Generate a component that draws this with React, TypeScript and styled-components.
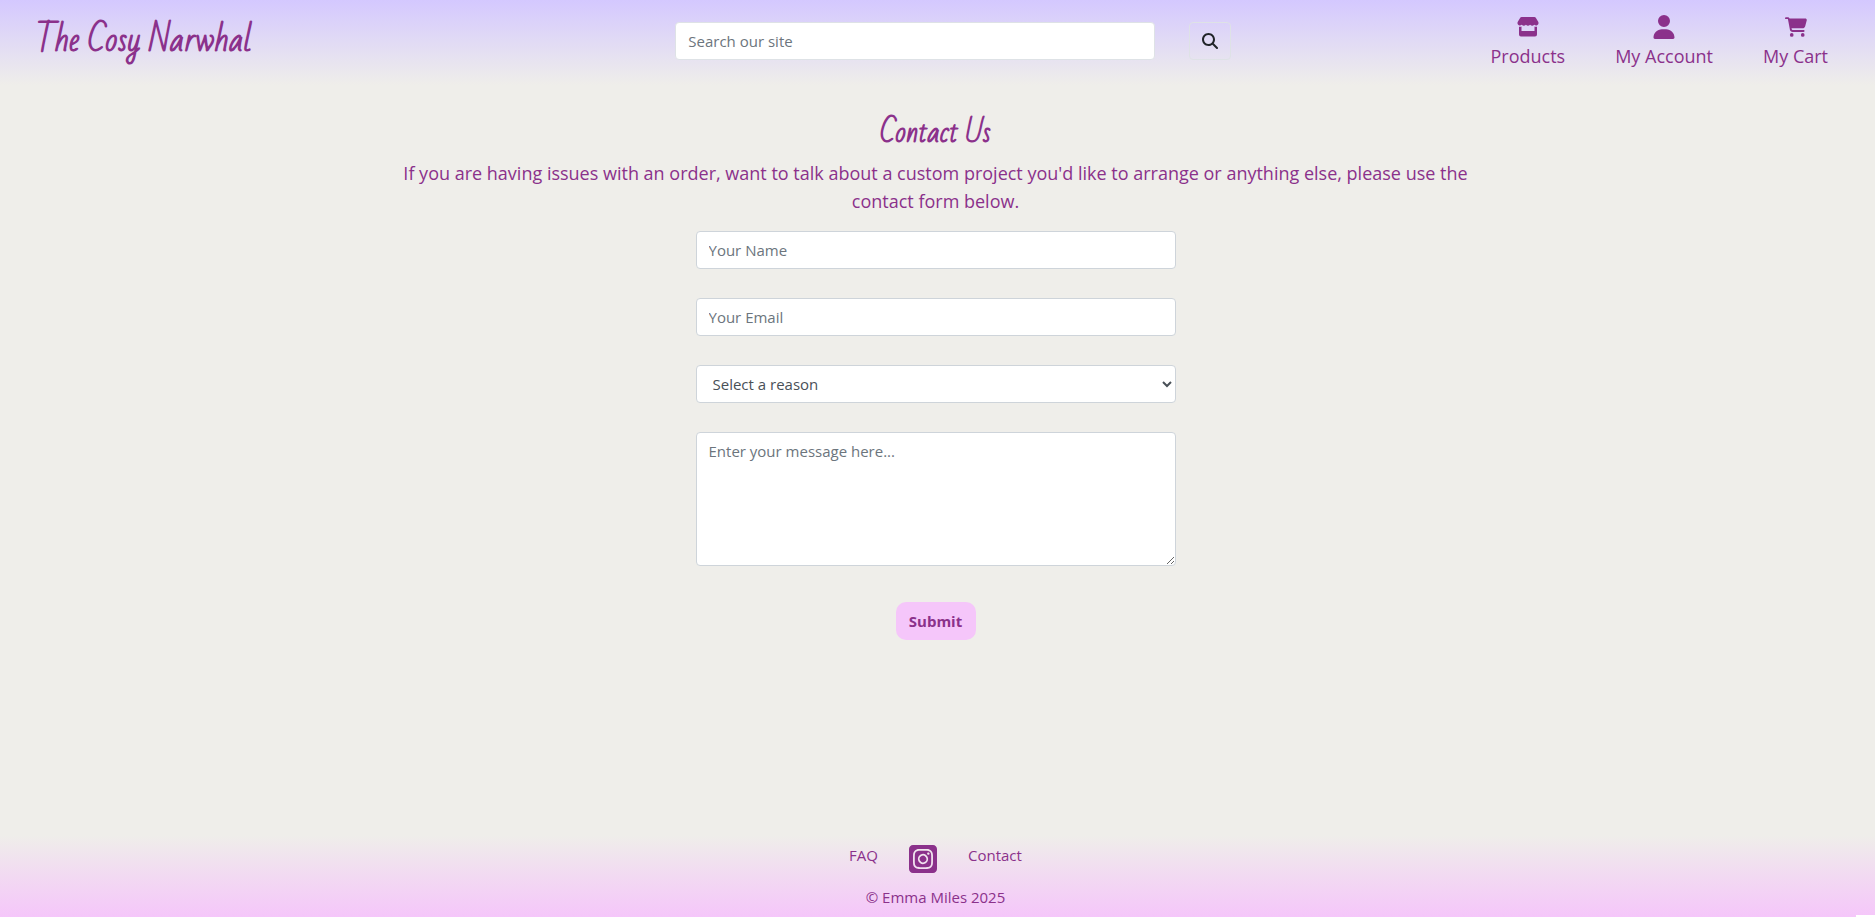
import React from "react";
import styled, { createGlobalStyle } from "styled-components";
import { FaUser, FaCartShopping, FaMagnifyingGlass, FaSquareInstagram } from "react-icons/fa6";

const plum = "#8b318b";
const paper = "#efeeea";
const line = "#ced4da";

const Global = createGlobalStyle`
  *, *::before, *::after { box-sizing: border-box; }
  body {
    margin: 0;
    background: ${paper};
    color: ${plum};
    font-family: "Segoe UI", "Open Sans", "Noto Sans", sans-serif;
    font-size: 15px;
    line-height: 24px;
  }
`;

const Page = styled.div`
  min-height: 100vh;
  display: flex;
  flex-direction: column;
`;

const Header = styled.header`
  display: grid;
  grid-template-columns: 15fr auto 14fr;
  align-items: center;
  height: 85px;
  padding: 0 47px 4px 36px;
  background: linear-gradient(#d4c8ff, ${paper});
`;

const scriptFace = `
  font-family: "Bad Script", "Liberation Sans Narrow", "Open Sans", sans-serif;
  font-weight: 700;
`;

const Brand = styled.a`
  ${scriptFace}
  justify-self: start;
  color: ${plum};
  font-size: 32px;
  line-height: 48px;
  text-decoration: none;
  white-space: nowrap;
`;

const Search = styled.form`
  display: flex;
  gap: 34px;
`;

const field = `
  display: block;
  width: 480px;
  max-width: 100%;
  border: 1px solid ${line};
  border-radius: 4px;
  background: #fff;
  color: #495057;
  font: inherit;
  &::placeholder { color: #6c757d; opacity: 1; }
`;

const Input = styled.input<{ $soft?: boolean }>`
  ${field}
  height: 38px;
  padding: 6px 12px;
  ${(p) => p.$soft && "border-color: #dee2e6;"}
`;

const Select = styled.select`
  ${field}
  height: 38px;
  padding: 6px 0 6px 12px;
`;

const TextArea = styled.textarea`
  ${field}
  height: 134px;
  padding: 6px 12px;
  resize: both;
`;

const SearchButton = styled.button`
  display: grid;
  place-items: center;
  width: 42px;
  height: 38px;
  padding: 0;
  border: 1px solid #dee2e6;
  border-radius: 4px;
  background: transparent;
  color: #212529;
  font-size: 16px;
`;

const Nav = styled.nav`
  justify-self: end;
  display: flex;
  gap: 50px;
  padding-top: 2px;
`;

const NavLink = styled.a`
  display: flex;
  flex-direction: column;
  align-items: center;
  color: ${plum};
  font-size: 18px;
  line-height: 30px;
  text-decoration: none;
  white-space: nowrap;
`;

const IconBox = styled.span`
  display: grid;
  place-items: center;
  height: 28px;
`;

const Main = styled.main`
  flex: 1;
  display: flex;
  flex-direction: column;
  align-items: center;
  padding: 24px 20px 24px 16px;
`;

const Title = styled.h1`
  ${scriptFace}
  margin: 0;
  font-size: 28px;
  line-height: 48px;
`;

const Lead = styled.p`
  width: 60%;
  margin: 2px 0 16px;
  font-size: 18px;
  line-height: 28px;
  text-align: center;
`;

const Form = styled.form`
  display: flex;
  flex-direction: column;
  align-items: center;
  gap: 29px;
`;

const Submit = styled.button`
  width: 80px;
  height: 38px;
  margin-top: 7px;
  padding: 0;
  border: 0;
  border-radius: 10px;
  background: #f5c6fa;
  color: ${plum};
  font: inherit;
  font-weight: 700;
`;

const Footer = styled.footer`
  display: flex;
  flex-direction: column;
  align-items: center;
  gap: 10px;
  height: 82px;
  padding: 8px 4px 0 0;
  background: linear-gradient(${paper}, #f5c6fa);
`;

const FooterLinks = styled.nav`
  display: flex;
  gap: 29px;
  height: 32px;
`;

const FooterLink = styled.a`
  color: ${plum};
  text-decoration: none;
`;

const StatusTab = styled.div`
  position: fixed;
  right: 0;
  bottom: 0;
  width: 19px;
  height: 2px;
  background: #fff;
`;

const StoreIcon = () => (
  <svg width="22" height="20" viewBox="0 0 22 20" fill="currentColor" aria-hidden="true">
    <path d="M4.6 0h12.8c.6 0 1.1.3 1.4.8l2.4 3.9c.8 1.5.1 3.400-1.5 3.700-.9.200-1.800-.1-2.400-.7a3 3 0 0 1-4.200 0 3 3 0 0 1-4.200 0 3 3 0 0 1-4.200 0c-.6.6-1.500.9-2.400.7C.7 8.100 0 6.200.8 4.700L3.200.8C3.500.3 4 0 4.600 0Z" />
    <path fillRule="evenodd" d="M2 9.700c.9.200 1.800.1 2.500-.2V14h13V9.500c.7.300 1.600.4 2.500.2V17.500a2 2 0 0 1-2 2H4a2 2 0 0 1-2-2Z" />
  </svg>
);

const block = (e: React.FormEvent) => e.preventDefault();

export default function App() {
  return (
    <Page>
      <Global />
      <Header>
        <Brand href="#">The Cosy Narwhal</Brand>
        <Search role="search" onSubmit={block}>
          <Input $soft type="search" aria-label="Search our site" placeholder="Search our site" />
          <SearchButton type="submit" aria-label="Search"><FaMagnifyingGlass /></SearchButton>
        </Search>
        <Nav aria-label="Shop">
          <NavLink href="#products"><IconBox><StoreIcon /></IconBox>Products</NavLink>
          <NavLink href="#account"><IconBox><FaUser size={24} /></IconBox>My Account</NavLink>
          <NavLink href="#cart"><IconBox><FaCartShopping size={22} /></IconBox>My Cart</NavLink>
        </Nav>
      </Header>
      <Main>
        <Title>Contact Us</Title>
        <Lead>
          If you are having issues with an order, want to talk about a custom project you'd like to
          arrange or anything else, please use the contact form below.
        </Lead>
        <Form onSubmit={block}>
          <Input type="text" aria-label="Your Name" placeholder="Your Name" />
          <Input type="email" aria-label="Your Email" placeholder="Your Email" />
          <Select aria-label="Select a reason"><option>Select a reason</option></Select>
          <TextArea aria-label="Message" placeholder="Enter your message here..." />
          <Submit type="submit">Submit</Submit>
        </Form>
      </Main>
      <Footer>
        <FooterLinks aria-label="Footer">
          <FooterLink href="#faq">FAQ</FooterLink>
          <FooterLink href="#instagram" aria-label="Instagram"><FaSquareInstagram size={32} /></FooterLink>
          <FooterLink href="#contact">Contact</FooterLink>
        </FooterLinks>
        <span>© Emma Miles 2025</span>
      </Footer>
      <StatusTab />
    </Page>
  );
}
